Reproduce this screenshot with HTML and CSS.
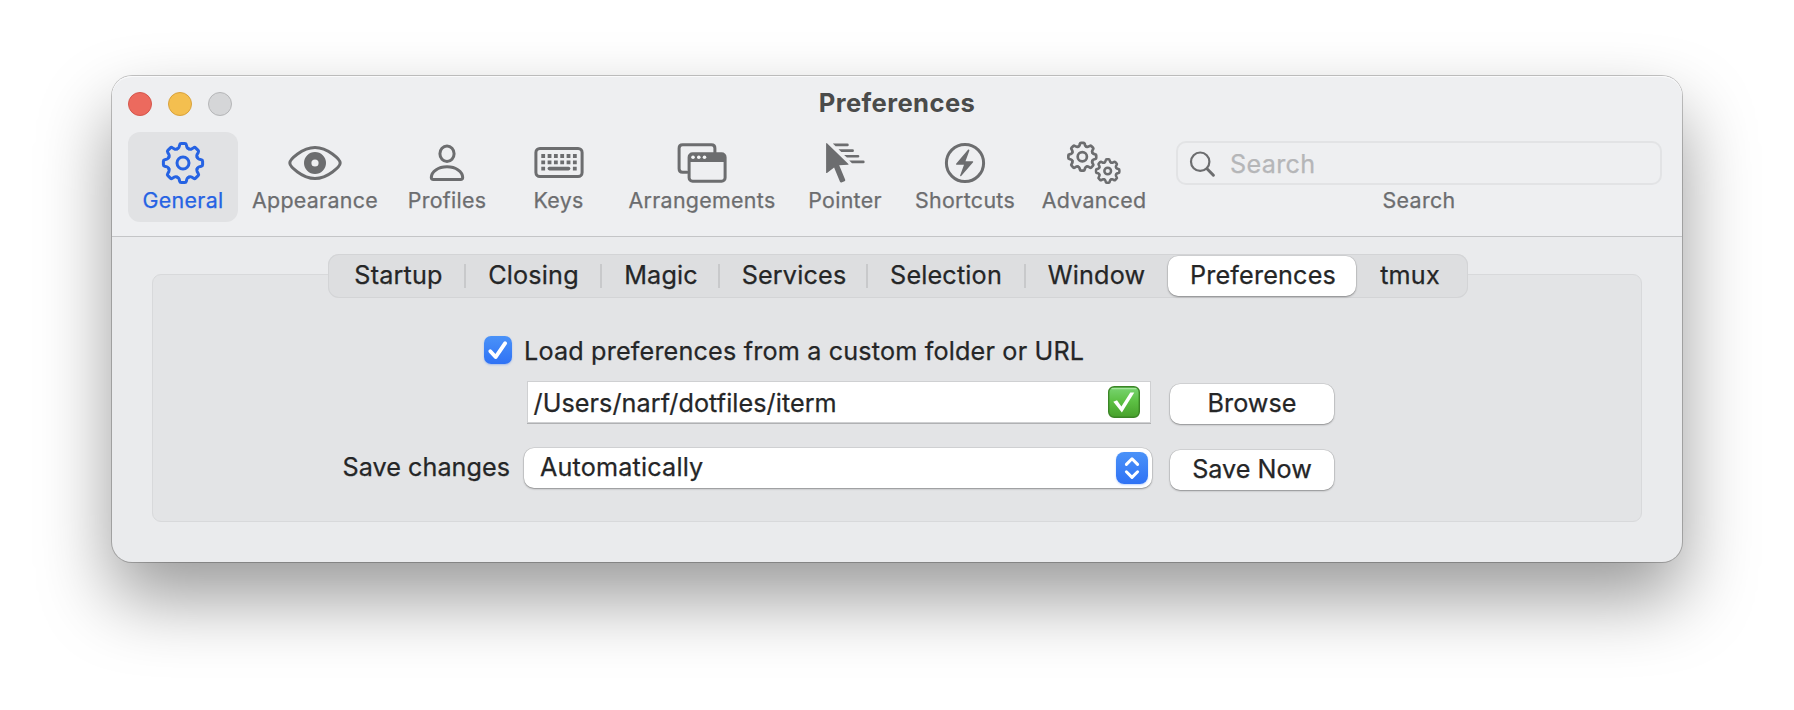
FILE: index.html
```html
<!DOCTYPE html>
<html lang="en">
<head>
<meta charset="utf-8">
<title>Preferences</title>
<link rel="stylesheet" href="styles.css">
</head>
<body>
<svg class="defs" width="0" height="0" aria-hidden="true">
  <defs>
    <path id="tooth" d="M-5.85 -14.1Q-4.2 -14.8 -3.9 -16L-3.3 -18.3Q-3 -19.6 -1.8 -19.6H1.8Q3 -19.6 3.3 -18.3L3.9 -16Q4.2 -14.8 5.85 -14.1"/>
    <g id="rim">
      <use href="#tooth"/><use href="#tooth" transform="rotate(45)"/><use href="#tooth" transform="rotate(90)"/><use href="#tooth" transform="rotate(135)"/>
      <use href="#tooth" transform="rotate(180)"/><use href="#tooth" transform="rotate(225)"/><use href="#tooth" transform="rotate(270)"/><use href="#tooth" transform="rotate(315)"/>
    </g>
  </defs>
</svg>
<main class="window">
  <header class="header">
    <div class="titlebar">
      <div class="lights"><i class="light close"></i><i class="light minimize"></i><i class="light zoom"></i></div>
      <h1 class="title">Preferences</h1>
    </div>
    <nav class="toolbar">
      <a class="item general selected">
        <svg class="icon" viewBox="-30 -22 60 44"><use href="#rim"/><circle r="6"/></svg>
        <span>General</span>
      </a>
      <a class="item appearance">
        <svg class="icon" viewBox="-30 -22 60 44"><path d="M-25.2 0C-25.2 -3.2 -13 -15.5 0 -15.5S25.2 -3.2 25.2 0S13 15.5 0 15.5S-25.2 3.2 -25.2 0Z"/><circle r="7.3" stroke-width="7.4"/></svg>
        <span>Appearance</span>
      </a>
      <a class="item profiles">
        <svg class="icon" viewBox="-30 -22 60 44"><ellipse cy="-9.3" rx="7.1" ry="7.7"/><path d="M-13.6 16.6H13.6Q15.7 16.6 15.7 14.3C15.4 8.6 9 3.8 0 3.8S-15.4 8.6 -15.7 14.3Q-15.7 16.6 -13.6 16.6Z"/></svg>
        <span>Profiles</span>
      </a>
      <a class="item keys">
        <svg class="icon" viewBox="-30 -22 60 44">
          <rect x="-23.1" y="-14.6" width="46.2" height="28.2" rx="4"/>
          <path class="caps" d="M-17.7 -7H18M-17.7 -.7H18M-17.7 5.6h3.8M13.9 5.6h3.8"/>
          <path stroke-width="3.6" d="M-9.6 5.6H9.6"/>
        </svg>
        <span>Keys</span>
      </a>
      <a class="item arrangements">
        <svg class="icon" viewBox="-30 -22 60 44">
          <path d="M-15 9.3H-19.4Q-22.9 9.3 -22.9 5.8V-14.8Q-22.9 -18.3 -19.4 -18.3H9.4Q12.9 -18.3 12.9 -14.8V-10"/>
          <rect x="-12.9" y="-9.3" width="36" height="27.6" rx="3.5"/>
          <path class="solid" d="M-13 -1.1V-6Q-13 -9.4 -9 -9.4H19Q23 -9.4 23 -6V-1.1Z"/>
          <g class="dots"><circle cx="-9" cy="-5.7" r="1.8"/><circle cx="-3.2" cy="-5.7" r="1.8"/><circle cx="2.5" cy="-5.7" r="1.8"/></g>
        </svg>
        <span>Arrangements</span>
      </a>
      <a class="item pointer">
        <svg class="icon" viewBox="-30 -22 60 44">
          <path class="solid" d="M-18.9 -19.6Q-18.6 -20.4 -18 -19.8L3.4 .9Q3.8 1.7 3 1.8L-5.8 2.3L.2 16.7Q.5 17.9 -.5 18.3L-3.6 19.5Q-4.6 19.7 -5 18.7L-10.9 4.5L-18 10Q-18.9 10.4 -18.9 9.5Z"/>
          <path class="solid" d="M-12.2 -19.4H2.4a1.35 1.35 0 0 1 0 2.7H-9.4ZM-6.5 -13.7H7.6a1.35 1.35 0 0 1 0 2.7H-3.7ZM-.9 -8.1H13a1.35 1.35 0 0 1 0 2.7H1.9ZM4.2 -2.4H18.3a1.35 1.35 0 0 1 0 2.7H7Z"/>
        </svg>
        <span>Pointer</span>
      </a>
      <a class="item shortcuts">
        <svg class="icon" viewBox="-30 -22 60 44"><circle r="18.6"/><path class="solid" d="M3.2 -13.4L-8.9 .7Q-9.3 1.7 -8.4 1.7H-1L-4.9 12.6Q-4.8 13.8 -3.8 13L8.1 -.8Q8.5 -1.7 7.6 -1.7H.5L4.4 -12.6Q4.3 -14.1 3.2 -13.4Z"/></svg>
        <span>Shortcuts</span>
      </a>
      <a class="item advanced">
        <svg class="icon" viewBox="-30 -22 60 44">
          <g transform="translate(-11.7 -6.3) scale(.71)" stroke-width="3.8"><use href="#rim"/><circle r="6.5"/></g>
          <g transform="translate(13.7 8) scale(.595)" stroke-width="4.2"><use href="#rim"/><circle r="5.6"/></g>
        </svg>
        <span>Advanced</span>
      </a>
      <div class="search">
        <div class="field">
          <svg class="glass" viewBox="0 0 28 28"><circle cx="11.2" cy="10.7" r="9.2"/><path d="M18 17.7L24.4 24.2" stroke-width="3"/></svg>
          <span class="placeholder">Search</span>
        </div>
        <span>Search</span>
      </div>
    </nav>
  </header>
  <section class="content">
    <div class="tabs">
      <a class="tab startup">Startup</a>
      <a class="tab closing">Closing</a>
      <a class="tab magic">Magic</a>
      <a class="tab services">Services</a>
      <a class="tab selection">Selection</a>
      <a class="tab win">Window</a>
      <a class="tab prefs active">Preferences</a>
      <a class="tab tmux">tmux</a>
    </div>
    <form class="box">
      <label class="check-row">
        <svg class="check" viewBox="0 0 28 28"><path d="M6.3 15.2L11.6 21.1L21.2 7.2"/></svg>
        <span>Load preferences from a custom folder or URL</span>
      </label>
      <div class="row">
        <span class="label"></span>
        <div class="path">
          <span class="path-text">/Users/narf/dotfiles/iterm</span>
          <svg class="ok" viewBox="0 0 32 32">
            <defs><linearGradient id="green" x1="0" y1="0" x2="0" y2="1"><stop offset="0" stop-color="#7ad573"/><stop offset=".48" stop-color="#5cc043"/><stop offset="1" stop-color="#47a02b"/></linearGradient></defs>
            <rect x=".7" y=".7" width="30.6" height="30.6" rx="5.5" fill="url(#green)" stroke="#3b8526" stroke-width="1.4"/>
            <path d="M4 2.6H28" stroke="#a5e79d" stroke-width="1.2" stroke-linecap="round"/>
            <path d="M5.3 15.7L9 14.2L13.4 20.4L22.3 6.4H26.3L13.9 26.6Z" fill="#fff"/>
          </svg>
        </div>
        <span class="button">Browse</span>
      </div>
      <div class="row save">
        <span class="label">Save changes</span>
        <div class="popup">
          <span>Automatically</span>
          <svg class="arrows" viewBox="0 0 32 32"><path d="M10.4 12.4L16 6.8L21.6 12.4M10.4 19.8L16 25.4L21.6 19.8"/></svg>
        </div>
        <span class="button">Save Now</span>
      </div>
    </form>
  </section>
</main>
</body>
</html>
```
FILE: styles.css
```css
* { box-sizing: border-box; }
html, body { margin: 0; height: 100%; }
body {
  padding: 76px 112px 0;
  overflow: hidden;
  background: #fff;
  font: 25.2px/30px Inter, "Liberation Sans", sans-serif;
  letter-spacing: .17px;
  color: #252627;
  -webkit-text-stroke: .25px currentColor;
}
.defs { position: absolute; }
.window {
  width: 1570px;
  height: 486px;
  border-radius: 20px;
  background: #eaebed;
  box-shadow: 0 0 0 1px rgba(0, 0, 0, .22), 0 36px 72px rgba(0, 0, 0, .4);
}
.header {
  height: 161px;
  border-bottom: 1px solid #c4c5c7;
  border-radius: 20px 20px 0 0;
  background: #eeeff1;
  box-shadow: inset 0 1px 0 #fafafb;
}
.titlebar {
  display: grid;
  grid-template-columns: 1fr auto 1fr;
  height: 56px;
  padding: 0 16px;
}
.lights { display: flex; gap: 16px; padding-top: 16px; }
.light { width: 24px; height: 24px; border-radius: 50%; border: 1px solid; }
.close { background: #ec6a5e; border-color: #d5564c; }
.minimize { background: #f4bf4f; border-color: #d9a23c; }
.zoom { background: #d5d6d8; border-color: #b5b6b8; }
.title {
  margin: 12px 0 0;
  font-size: 25.6px;
  line-height: 30px;
  font-weight: 700;
  letter-spacing: .4px;
  color: #4a4b4a;
  -webkit-text-stroke: 0;
}
.toolbar {
  display: flex;
  padding: 0 20px 0 16px;
  font-size: 21.4px;
  line-height: 26px;
  letter-spacing: .3px;
  color: #6c6d6f;
}
.item {
  display: flex;
  flex-direction: column;
  align-items: center;
  gap: 2px;
  height: 90px;
  padding-top: 9px;
  border-radius: 12px;
}
.selected { background: #e1e2e4; color: #2663e3; }
.general { width: 110px; }
.appearance { width: 154px; }
.profiles { width: 110px; }
.keys { width: 113px; }
.arrangements { width: 174px; }
.pointer { width: 112px; }
.shortcuts { width: 128px; }
.advanced { width: 130px; }
.icon {
  width: 60px;
  height: 44px;
  flex: none;
  fill: none;
  stroke: currentColor;
  stroke-width: 3;
  stroke-linecap: round;
  stroke-linejoin: round;
}
.solid { fill: currentColor; stroke: none; }
.dots { fill: #f4f5f6; stroke: none; }
.caps { stroke-width: 3.8; stroke-linecap: butt; stroke-dasharray: 3.8 2.53; }
.search {
  display: flex;
  flex-direction: column;
  align-items: center;
  gap: 2px;
  width: 486px;
  margin-left: auto;
  padding-top: 9px;
}
.field {
  display: flex;
  align-self: stretch;
  height: 44px;
  padding: 8px 0 0 11px;
  border: 2px solid #e2e3e5;
  border-radius: 10px;
}
.glass { width: 28px; height: 28px; fill: none; stroke: #6c6d6f; stroke-width: 2.2; stroke-linecap: round; }
.placeholder { margin: -2px 0 0 13px; font-size: 25.2px; line-height: 30px; color: #b5b6b8; }

.content { padding: 17px 40px 0; }
.tabs {
  position: relative;
  display: flex;
  width: 1140px;
  height: 44px;
  margin: 0 0 -24px 176px;
  border-radius: 11px;
  background: #dddee0;
  box-shadow: inset 0 0 0 1px #d3d4d6;
}
.tab {
  display: flex;
  align-items: center;
  justify-content: center;
  padding-bottom: 2px;
}
.tab::after { content: ""; width: 2px; height: 24px; margin: 2px -1px 0 auto; background: #c8c9cb; }
.tab::before { content: ""; margin-right: auto; }
.win::after, .prefs::after, .tmux::after { background: none; }
.startup { width: 137px; padding-left: 5px; }
.closing { width: 136px; padding-left: 2px; }
.magic { width: 118px; padding-left: 3px; }
.services { width: 148px; padding-left: 3px; }
.selection { width: 158px; padding-left: 1px; }
.win { width: 143px; padding-left: 1px; }
.prefs { width: 188px; height: 40px; margin-top: 2px; padding-left: 3px; }
.tmux { width: 112px; padding-right: 3px; }
.active {
  border-radius: 10px;
  background: #fff;
  box-shadow: 0 0 0 .5px rgba(0, 0, 0, .1), 0 1px 2px rgba(0, 0, 0, .35);
}
.box {
  height: 248px;
  padding-top: 61px;
  border: 1px solid #d8d9db;
  border-radius: 9px;
  background: #e3e4e6;
}
.check-row { display: flex; gap: 12px; height: 28px; padding-left: 331px; }
.check {
  width: 28px;
  height: 28px;
  border-radius: 7px;
  background: linear-gradient(#4a92f8, #2f72f5);
  box-shadow: 0 1px 2px rgba(47, 114, 245, .35);
  fill: none;
  stroke: #fff;
  stroke-width: 3.8;
  stroke-linecap: round;
  stroke-linejoin: round;
}
.row { display: flex; margin-top: 18px; }
.save { margin-top: 24px; }
.label { width: 357px; padding: 4px 0 0; text-align: right; letter-spacing: .03px; }
.path {
  display: flex;
  align-items: flex-start;
  justify-content: space-between;
  width: 622px;
  height: 40px;
  margin: 0 20px 0 18px;
  padding: 4px 10px 4px 5.5px;
  background: #fff;
  box-shadow: 0 0 0 1px #cfd0d2, 0 1px 0 1px #b0b1b3;
  letter-spacing: .06px;
}
.path-text { padding-top: 2px; }
.ok { width: 32px; height: 32px; }
.popup {
  display: flex;
  justify-content: space-between;
  width: 628px;
  height: 40px;
  margin: 0 18px 0 14px;
  padding: 4px 4px 4px 16px;
  border-radius: 10px;
  background: #fff;
  box-shadow: 0 0 0 .5px rgba(0, 0, 0, .14), 0 1px 2px rgba(0, 0, 0, .32);
}
.arrows {
  width: 32px;
  height: 32px;
  border-radius: 8px;
  background: linear-gradient(#4a92f8, #2f72f5);
  box-shadow: 0 1px 2px rgba(47, 114, 245, .3);
  fill: none;
  stroke: #fff;
  stroke-width: 3;
  stroke-linecap: round;
  stroke-linejoin: round;
}
.button {
  width: 164px;
  height: 40px;
  margin-top: 2px;
  padding-top: 4px;
  border-radius: 10px;
  background: #fff;
  box-shadow: 0 0 0 .5px rgba(0, 0, 0, .14), 0 1px 2px rgba(0, 0, 0, .32);
  text-align: center;
  letter-spacing: 0;
}
```
